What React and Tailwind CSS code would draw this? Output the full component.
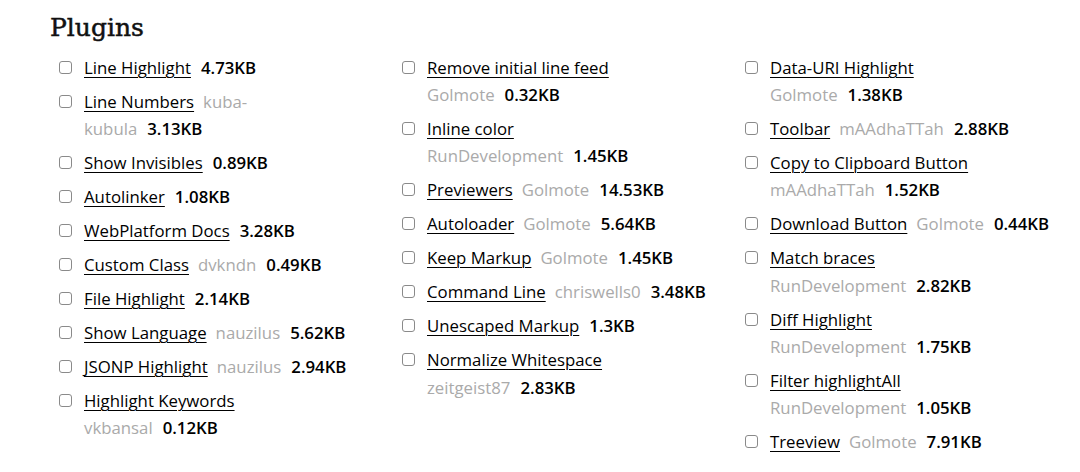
import React from 'react';

// Plugin list, split into the three columns as shown on the page.
// `wrap` says where the second line starts: 'author' puts the author on line 2,
// and a string splits the author text itself after that prefix.
const columns = [
  [
    { name: 'Line Highlight', size: '4.73KB' },
    { name: 'Line Numbers', author: 'kuba-kubula', size: '3.13KB', wrap: 'kuba-' },
    { name: 'Show Invisibles', size: '0.89KB' },
    { name: 'Autolinker', size: '1.08KB' },
    { name: 'WebPlatform Docs', size: '3.28KB' },
    { name: 'Custom Class', author: 'dvkndn', size: '0.49KB' },
    { name: 'File Highlight', size: '2.14KB' },
    { name: 'Show Language', author: 'nauzilus', size: '5.62KB' },
    { name: 'JSONP Highlight', author: 'nauzilus', size: '2.94KB' },
    { name: 'Highlight Keywords', author: 'vkbansal', size: '0.12KB', wrap: 'author' },
  ],
  [
    { name: 'Remove initial line feed', author: 'Golmote', size: '0.32KB', wrap: 'author' },
    { name: 'Inline color', author: 'RunDevelopment', size: '1.45KB', wrap: 'author' },
    { name: 'Previewers', author: 'Golmote', size: '14.53KB' },
    { name: 'Autoloader', author: 'Golmote', size: '5.64KB' },
    { name: 'Keep Markup', author: 'Golmote', size: '1.45KB' },
    { name: 'Command Line', author: 'chriswells0', size: '3.48KB' },
    { name: 'Unescaped Markup', size: '1.3KB' },
    { name: 'Normalize Whitespace', author: 'zeitgeist87', size: '2.83KB', wrap: 'author' },
  ],
  [
    { name: 'Data-URI Highlight', author: 'Golmote', size: '1.38KB', wrap: 'author' },
    { name: 'Toolbar', author: 'mAAdhaTTah', size: '2.88KB' },
    { name: 'Copy to Clipboard Button', author: 'mAAdhaTTah', size: '1.52KB', wrap: 'author' },
    { name: 'Download Button', author: 'Golmote', size: '0.44KB' },
    { name: 'Match braces', author: 'RunDevelopment', size: '2.82KB', wrap: 'author' },
    { name: 'Diff Highlight', author: 'RunDevelopment', size: '1.75KB', wrap: 'author' },
    { name: 'Filter highlightAll', author: 'RunDevelopment', size: '1.05KB', wrap: 'author' },
    { name: 'Treeview', author: 'Golmote', size: '7.91KB' },
  ],
];

const Name = ({ children }) => (
  <a href="#" className="text-black underline underline-offset-[3px] decoration-1">
    {children}
  </a>
);

const Author = ({ children, first }) => (
  <span className={`text-[#aaaaaa] ${first ? '' : 'ml-[9px]'}`}>{children}</span>
);

const Size = ({ children, first }) => (
  <span className={`text-black font-semibold ${first ? '' : 'ml-[10px]'}`}>{children}</span>
);

function PluginItem({ p }) {
  let line1;
  let line2 = null;

  if (p.wrap === 'author') {
    line1 = <Name>{p.name}</Name>;
    line2 = (
      <>
        <Author first>{p.author}</Author>
        <Size>{p.size}</Size>
      </>
    );
  } else if (p.wrap) {
    const rest = p.author.slice(p.wrap.length);
    line1 = (
      <>
        <Name>{p.name}</Name>
        <Author>{p.wrap}</Author>
      </>
    );
    line2 = (
      <>
        <Author first>{rest}</Author>
        <Size>{p.size}</Size>
      </>
    );
  } else {
    line1 = (
      <>
        <Name>{p.name}</Name>
        {p.author && <Author>{p.author}</Author>}
        <Size>{p.size}</Size>
      </>
    );
  }

  return (
    <li className="flex items-start mb-[6.8px]">
      <span className="mt-[7px] w-[13px] h-[13px] shrink-0 rounded-[3px] border border-[#8a8a8a] bg-white" />
      <div className="ml-[12px] leading-[27.2px] whitespace-nowrap">
        <div>{line1}</div>
        {line2 && <div>{line2}</div>}
      </div>
    </li>
  );
}

export default function App() {
  return (
    <div
      className="bg-white min-h-screen pl-[50px] pt-[11px] text-[16.8px] text-black"
      style={{ fontFamily: '"Open Sans", "Liberation Sans", Arial, sans-serif' }}
    >
      <h2
        className="text-[25px] leading-[34px] mb-[9px] text-[#111] [-webkit-text-stroke:0.5px_#111]"
        style={{ fontFamily: '"DejaVu Serif", "Liberation Serif", serif' }}
      >
        Plugins
      </h2>
      <div className="grid grid-cols-[343px_343px_343px] pl-[9px]">
        {columns.map((col, i) => (
          <ul key={i}>
            {col.map((p) => (
              <PluginItem key={p.name} p={p} />
            ))}
          </ul>
        ))}
      </div>
    </div>
  );
}
